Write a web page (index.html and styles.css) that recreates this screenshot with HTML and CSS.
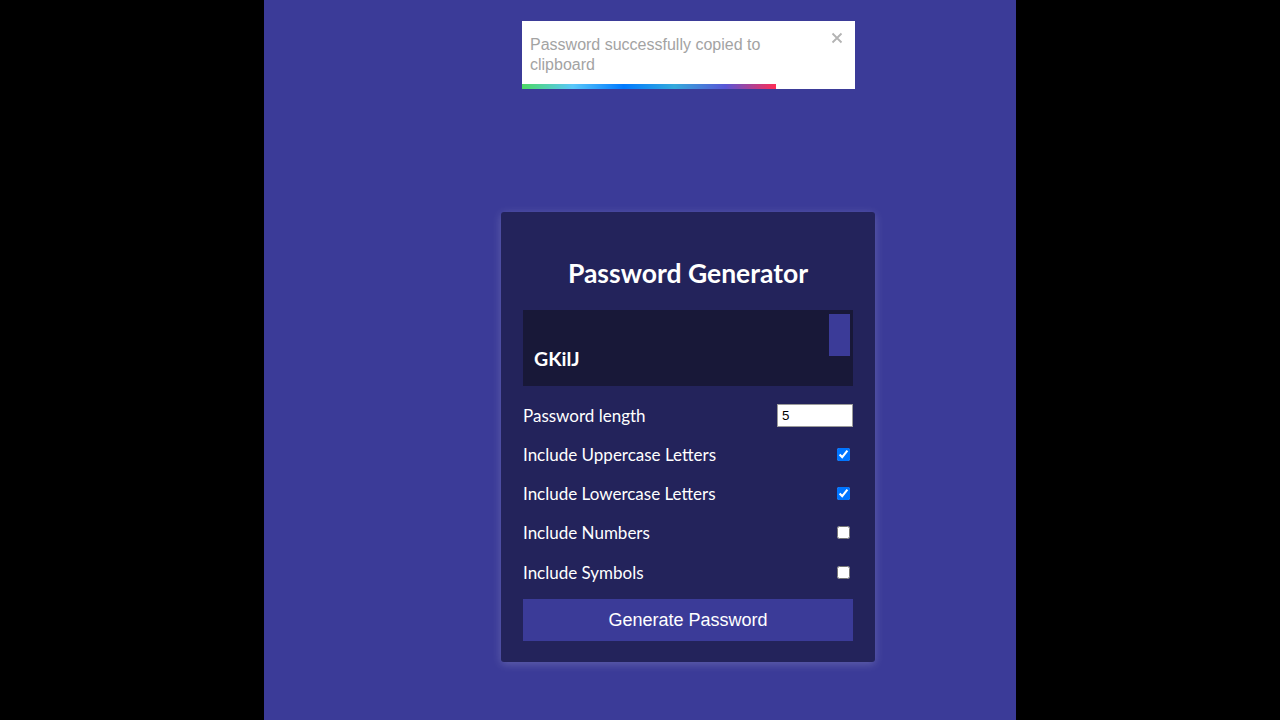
FILE: index.html
```html
<!DOCTYPE html>
<html lang="en">
<head>
<meta charset="utf-8">
<title>Password Generator</title>
<link rel="stylesheet" href="styles.css">
</head>
<body>
<div class="stage">
  <div class="toast">
    <div class="toast-body">Password successfully copied to clipboard</div>
    <button class="toast-close" aria-label="close">
      <svg viewBox="0 0 12 12" width="12" height="12"><path d="M1.5 1.5 L10.5 10.5 M10.5 1.5 L1.5 10.5" stroke="currentColor" stroke-width="1.8" fill="none"/></svg>
    </button>
    <div class="toast-progress"></div>
  </div>

  <main class="card">
    <h2 class="title">Password Generator</h2>
    <div class="result">
      <span class="result-text">GKilJ</span>
      <button class="copy-btn" aria-label="copy"></button>
    </div>
    <div class="options">
      <div class="row">
        <label for="len">Password length</label>
        <input id="len" class="num" type="number" value="5">
      </div>
      <div class="row">
        <label for="up">Include Uppercase Letters</label>
        <input id="up" type="checkbox" checked>
      </div>
      <div class="row">
        <label for="low">Include Lowercase Letters</label>
        <input id="low" type="checkbox" checked>
      </div>
      <div class="row">
        <label for="numb">Include Numbers</label>
        <input id="numb" type="checkbox">
      </div>
      <div class="row">
        <label for="sym">Include Symbols</label>
        <input id="sym" type="checkbox">
      </div>
    </div>
    <button class="generate">Generate Password</button>
  </main>
</div>
</body>
</html>
```

FILE: styles.css
```css
html, body {
  margin: 0;
  padding: 0;
  height: 100%;
  background: #000;
}

body {
  display: flex;
  justify-content: center;
  font-family: Lato, "Open Sans", sans-serif;
}

.stage {
  width: 752px;
  height: 720px;
  background: #3b3b98;
  box-sizing: border-box;
  padding: 212px 0 0 237px;
}

.toast {
  position: fixed;
  top: 21px;
  left: 522px;
  width: 333px;
  height: 68px;
  background: #fff;
  box-sizing: border-box;
  padding: 14px 30px 0 8px;
  font-family: "Liberation Sans", Arial, sans-serif;
  font-size: 16px;
  line-height: 20px;
  color: #a3a3a3;
}

.toast-close {
  position: absolute;
  top: 11px;
  right: 12px;
  width: 12px;
  height: 12px;
  padding: 0;
  border: 0;
  background: none;
  color: #b3b3b3;
  display: flex;
}

.toast-progress {
  position: absolute;
  left: 0;
  bottom: 0;
  width: 254px;
  height: 5px;
  background: linear-gradient(to right, #4cd964, #5ac8fa, #007aff, #34aadc, #5856d6, #ff2d55);
}

.card {
  width: 374px;
  box-sizing: border-box;
  background: #23235b;
  border-radius: 3px;
  box-shadow: 0 2px 10px rgba(255, 255, 255, 0.2);
  padding: 46px 22px 21px;
  color: #fff;
}

.title {
  margin: 0 0 22px;
  text-align: center;
  font-size: 26.5px;
  line-height: 30px;
  font-weight: 700;
}

.result {
  position: relative;
  height: 76px;
  background: #181838;
  box-sizing: border-box;
  padding: 0 11px 16px;
  display: flex;
  align-items: flex-end;
}

.result-text {
  font-size: 19.5px;
  line-height: 22px;
  font-weight: 700;
}

.copy-btn {
  position: absolute;
  top: 4px;
  right: 3px;
  width: 21px;
  height: 42px;
  padding: 0;
  border: 0;
  background: #3b3b98;
}

.options {
  display: flex;
  flex-direction: column;
  gap: 15.25px;
  margin: 17px 0 15px;
}

.row {
  height: 24px;
  display: flex;
  align-items: center;
  justify-content: space-between;
  font-size: 17px;
}

.num {
  width: 76px;
  height: 23px;
  box-sizing: border-box;
  border: 1px solid #9a9a9a;
  padding: 1px 4px;
  font-family: "Liberation Sans", Arial, sans-serif;
  font-size: 13.33px;
  background: #fff;
  color: #000;
}

.row input[type="checkbox"] {
  width: 13px;
  height: 13px;
  margin: 3px 3px 3px 4px;
}

.generate {
  display: block;
  width: 100%;
  height: 42px;
  border: 0;
  background: #3b3b98;
  color: #fff;
  font-family: "Liberation Sans", Arial, sans-serif;
  font-size: 18px;
}
```
